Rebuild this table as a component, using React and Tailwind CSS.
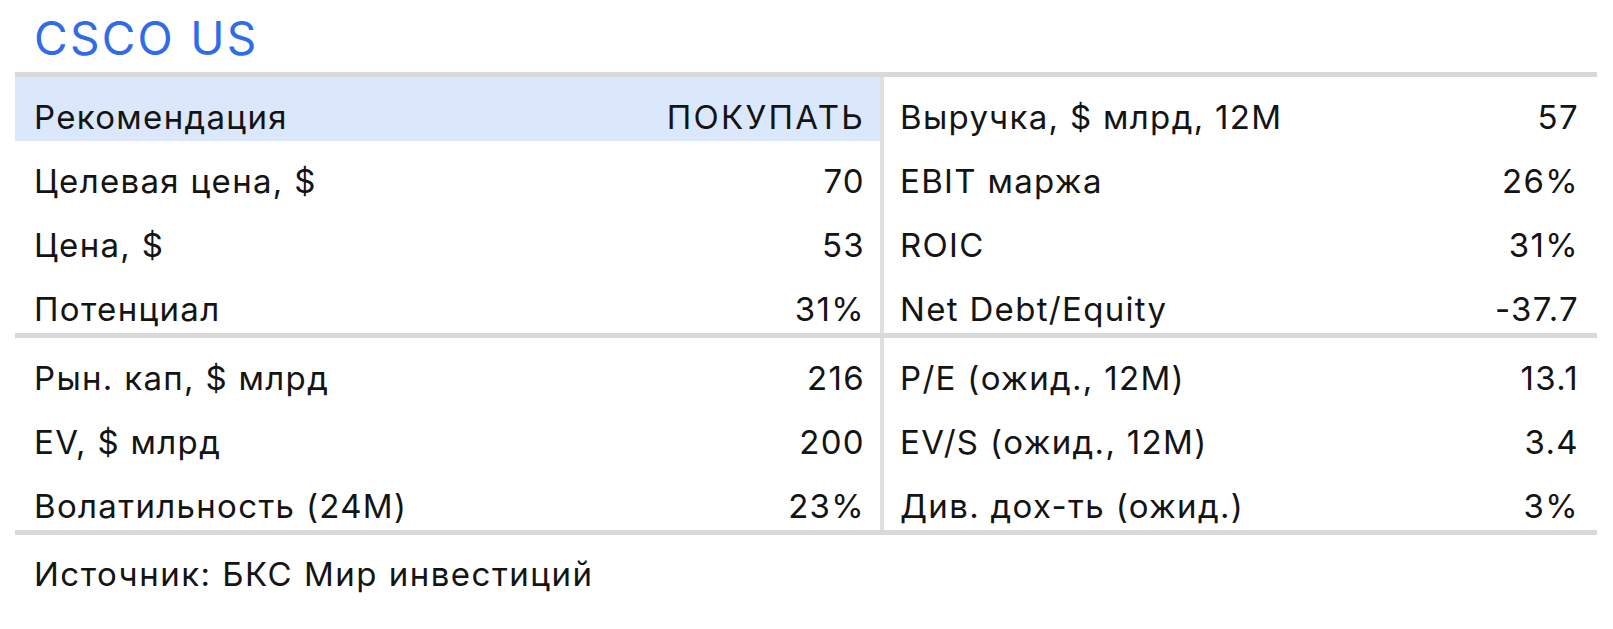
import React from "react";

const block1 = [
  ["Рекомендация", "ПОКУПАТЬ", "Выручка, $ млрд, 12M", "57", true],
  ["Целевая цена, $", "70", "EBIT маржа", "26%"],
  ["Цена, $", "53", "ROIC", "31%"],
  ["Потенциал", "31%", "Net Debt/Equity", "-37.7"],
];
const block2 = [
  ["Рын. кап, $ млрд", "216", "P/E (ожид., 12M)", "13.1"],
  ["EV, $ млрд", "200", "EV/S (ожид., 12M)", "3.4"],
  ["Волатильность (24M)", "23%", "Див. дох-ть (ожид.)", "3%"],
];

function Block({ rows }) {
  return (
    <div className="flex">
      <div className="w-[865px] flex flex-col">
        {rows.map((r, i) => (
          <div
            key={i}
            className={`h-[64px] flex items-end justify-between pl-[19px] pr-[15px] pb-[7px] ${r[4] ? "bg-[#dbe8fb]" : ""}`}
          >
            <span>{r[0]}</span>
            <span className={r[4] ? "tracking-[0.07em]" : ""}>{r[1]}</span>
          </div>
        ))}
      </div>
      <div className="w-[4px] bg-[#e0e0e0]" />
      <div className="flex-1 flex flex-col">
        {rows.map((r, i) => (
          <div key={i} className="h-[64px] flex items-end justify-between pl-[16px] pr-[18px] pb-[7px]">
            <span>{r[2]}</span>
            <span>{r[3]}</span>
          </div>
        ))}
      </div>
    </div>
  );
}

export default function App() {
  return (
    <div
      className="w-[1613px] h-[629px] bg-white text-[#141414] overflow-hidden"
      style={{ fontFamily: "Inter, 'Liberation Sans', sans-serif" }}
    >
      <div className="h-[72px] pl-[34px] pt-[15px] text-[46px] leading-none tracking-[0.05em] text-[#2f6bea]">CSCO US</div>
      <div className="ml-[15px] mr-[16px] text-[33px] leading-none tracking-[0.04em]">
        <div className="h-[5px] bg-[#d9d9d9]" />
        <Block rows={block1} />
        <div className="h-[5px] bg-[#d9d9d9]" />
        <Block rows={block2} />
        <div className="h-[5px] bg-[#d9d9d9]" />
      </div>
      <div className="pl-[34px] pt-[23px] text-[33px] leading-none tracking-[0.045em]">Источник: БКС Мир инвестиций</div>
    </div>
  );
}
